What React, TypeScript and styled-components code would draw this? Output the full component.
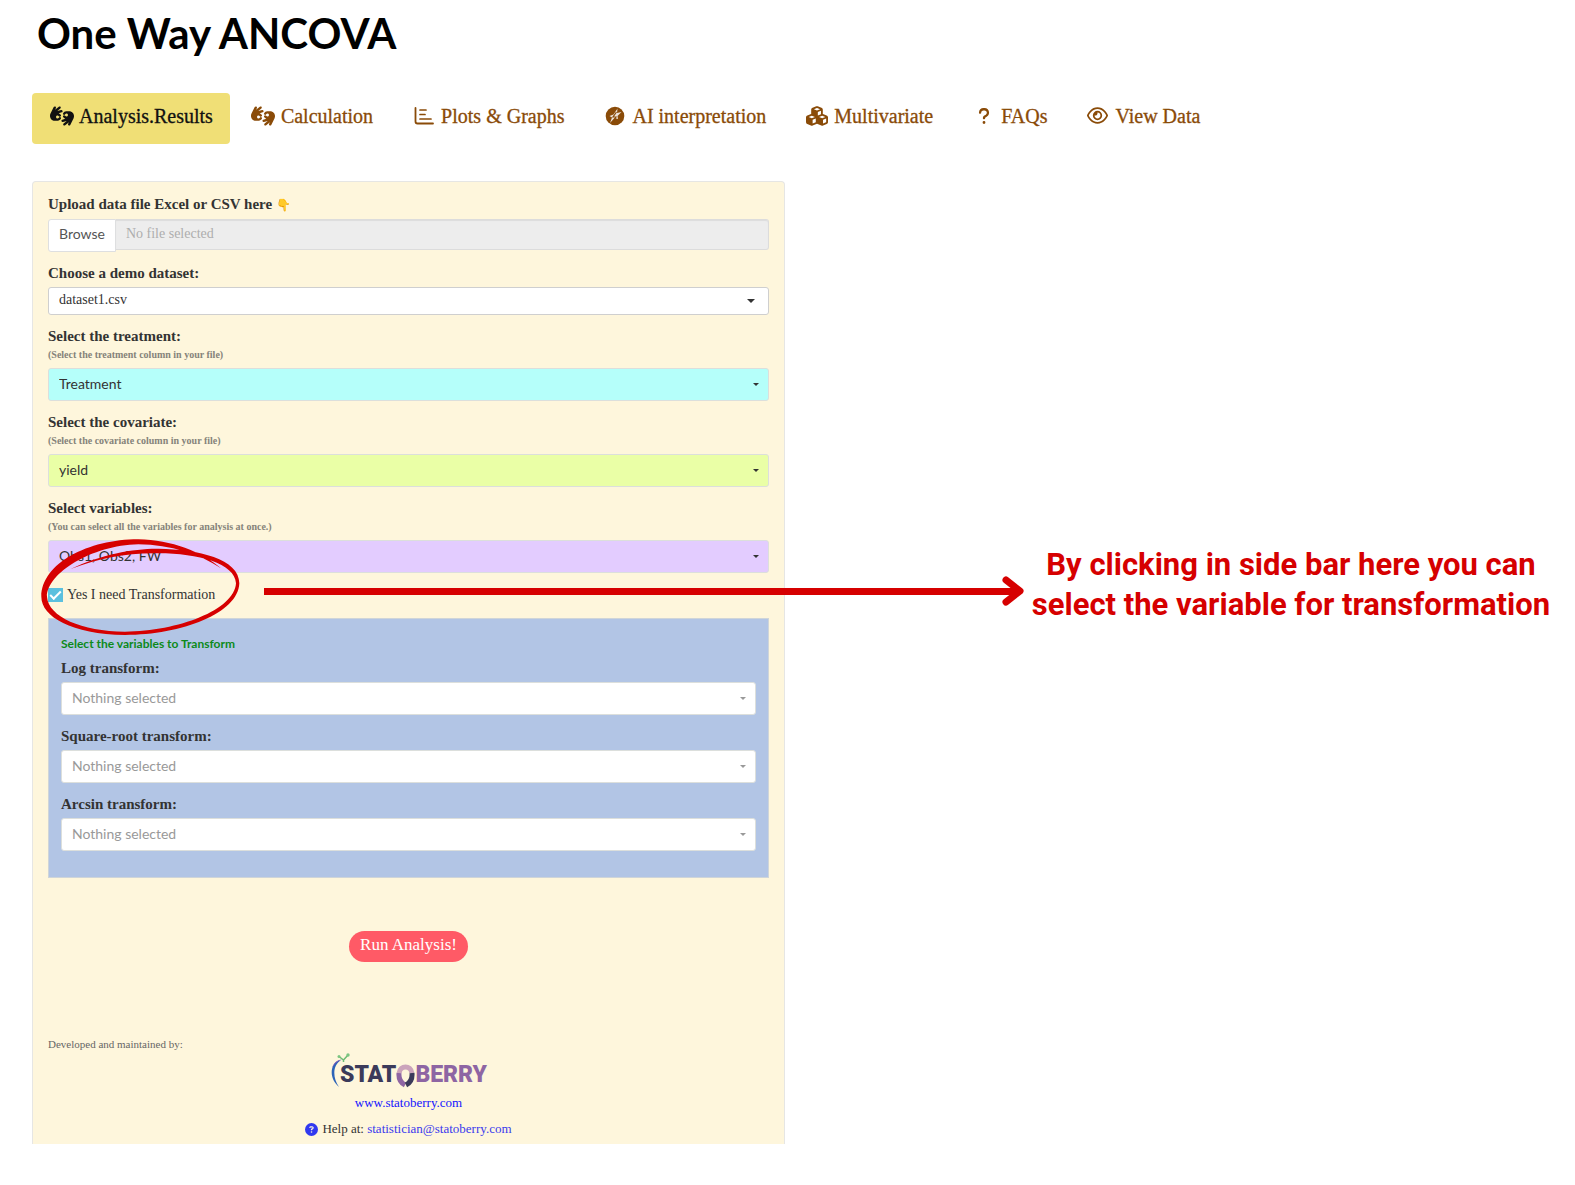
import React, { useState } from 'react';
import styled, { createGlobalStyle } from 'styled-components';
import {
  FaHandsAslInterpreting,
  FaCubes,
  FaQuestion,
  FaRegEye,
  FaCircleQuestion,
} from 'react-icons/fa6';

const serif = '"Liberation Serif", "Times New Roman", serif';
const sans = 'Lato, "Open Sans", sans-serif';
const red = '#d60000';

const GlobalStyle = createGlobalStyle`
  *, *::before, *::after { box-sizing: border-box; }
  body {
    margin: 0;
    background: #fff;
    color: #333;
    font-family: ${serif};
    font-size: 14px;
  }
`;

const Page = styled.div`
  padding: 7px 0 40px 32px;
`;

const Title = styled.h1`
  margin: 0 0 34px;
  padding-left: 5px;
  font: 700 42px/52px ${sans};
  color: #000;
`;

const Nav = styled.nav`
  display: flex;
  flex-wrap: wrap;
  gap: 4px;
  margin-bottom: 37px;
`;

const Tab = styled.a<{ $active?: boolean }>`
  display: flex;
  align-items: center;
  gap: 5px;
  height: 51px;
  padding: 0 17px 6px;
  border-radius: 4px;
  background: ${(p) => (p.$active ? '#f0df76' : 'transparent')};
  color: ${(p) => (p.$active ? '#111' : '#8a4b08')};
  font-size: 20px;
  line-height: 24px;
  text-decoration: none;
  -webkit-text-stroke: 0.3px currentColor;
`;

const TabIcon = styled.span`
  display: flex;
  justify-content: center;
  width: 25px;
`;

const Body = styled.div`
  position: relative;
  display: grid;
  grid-template-columns: 753fr 790fr;
  align-items: start;
`;

const Panel = styled.form`
  display: flex;
  flex-direction: column;
  padding: 12px 15px 5px;
  border: 1px solid #e6e6e4;
  border-bottom: 0;
  border-radius: 4px 4px 0 0;
  background: #fef6dc;
`;

const Field = styled.div`
  margin-bottom: 11px;
`;

const Label = styled.label`
  display: block;
  margin-bottom: 4px;
  font-size: 15px;
  font-weight: 700;
  line-height: 20px;
`;

const Emoji = styled.span`
  font-size: 12px;
`;

const Hint = styled.small`
  display: block;
  color: #85837a;
  font-size: 10px;
  line-height: 18px;
`;

const FileRow = styled.div`
  display: flex;
  align-items: flex-start;
  margin-bottom: 11px;
`;

const HiddenFile = styled.input`
  position: absolute;
  width: 1px;
  height: 1px;
  opacity: 0;
`;

const Browse = styled.label`
  height: 33px;
  padding: 0 10px;
  border: 1px solid #dedfe0;
  border-radius: 3px 0 0 3px;
  background: #fff;
  color: #555;
  font: 14px/28px ${sans};
`;

const FileName = styled.input`
  flex: 1;
  min-width: 0;
  height: 31px;
  padding: 0 10px 2px;
  border: 1px solid #dcdcdc;
  border-left: 0;
  border-radius: 0 3px 3px 0;
  background: #ededed;
  box-shadow: inset 0 1px 1px rgba(0, 0, 0, 0.07);
  font: 14px ${serif};
  &::placeholder {
    color: #adadad;
    opacity: 1;
  }
`;

const SelectBox = styled.div`
  display: grid;
  align-items: center;
  & > * {
    grid-area: 1 / 1;
  }
`;

const Select = styled.select<{ $fill: string; $serif?: boolean; $muted?: boolean }>`
  appearance: none;
  width: 100%;
  height: ${(p) => (p.$serif ? 28 : 33)}px;
  padding: 0 10px 3px;
  border: 1px solid ${(p) => (p.$serif ? '#cfcfcf' : '#dcdfdc')};
  border-radius: 3px;
  background: ${(p) => p.$fill};
  color: ${(p) => (p.$muted ? '#999' : '#333')};
  font: 14px ${(p) => (p.$serif ? serif : sans)};
`;

const Caret = styled.span<{ $large?: boolean; $muted?: boolean }>`
  justify-self: end;
  margin-right: ${(p) => (p.$large ? 14 : 10)}px;
  border: ${(p) => (p.$large ? 4 : 3)}px solid transparent;
  border-top-color: ${(p) => (p.$muted ? '#999' : '#333')};
  border-bottom: 0;
  pointer-events: none;
`;

const CheckRow = styled.div`
  position: relative;
  margin-bottom: 12px;
`;

const CheckLabel = styled.label`
  display: flex;
  align-items: center;
  gap: 4px;
  height: 22px;
  font-size: 14px;
`;

const Checkbox = styled.input`
  appearance: none;
  display: grid;
  place-items: center;
  width: 15px;
  height: 14px;
  margin: 0;
  background: #fff;
  &:checked {
    background: #5bc0de;
  }
  &:checked::after {
    content: '';
    width: 11px;
    height: 6px;
    border: solid #fff;
    border-width: 0 0 2px 2px;
    transform: translateY(-1px) rotate(-45deg);
  }
`;

const Circle = styled.svg`
  position: absolute;
  left: -8px;
  top: -48px;
  width: 202px;
  height: 102px;
  fill: ${red};
  pointer-events: none;
`;

const TransformBox = styled.fieldset`
  min-width: 0;
  margin: 0;
  padding: 15px 12px;
  border: 1px solid #cfd5d9;
  background: #b2c5e5;
`;

const TransformTitle = styled.p`
  margin: 0 0 4px;
  color: #0c8a1a;
  font: 700 12px/20px ${sans};
`;

const RunButton = styled.button`
  align-self: center;
  height: 31px;
  margin: 53px 0 72px;
  padding: 0 11px 4px;
  border: 0;
  border-radius: 16px;
  background: #ff5a66;
  color: #fff;
  font: 17px/24px ${serif};
`;

const Credit = styled.p`
  margin: 0;
  color: #666;
  font-size: 11px;
  line-height: 20px;
`;

const Footer = styled.footer`
  display: flex;
  flex-direction: column;
  align-items: center;
  font-size: 13px;
  line-height: 20px;
`;

const Logo = styled.div`
  display: flex;
  align-items: flex-end;
  height: 35px;
  margin-bottom: 4px;
  font: 900 23px/28px Roboto, ${sans};
`;

const LogoDark = styled.span`
  margin-left: -12px;
  color: #3b3a5a;
`;

const LogoPurple = styled.span`
  color: #8e65a3;
`;

const SiteLink = styled.a`
  margin-bottom: 6px;
  color: #1414ff;
  text-decoration: none;
`;

const Help = styled.div`
  display: flex;
  align-items: center;
  gap: 4px;
`;

const MailLink = styled.a`
  color: #3a3aee;
  text-decoration: none;
`;

const Callout = styled.p`
  margin: 364px 0 0;
  padding: 0 16px 0 238px;
  color: ${red};
  font: 700 31px/40px Roboto, ${sans};
  text-align: center;
`;

const Arrow = styled.div`
  position: absolute;
  top: 395px;
  left: 232px;
  right: calc(100% * 790 / 1543 - 239px);
  display: flex;
  align-items: center;
  pointer-events: none;
`;

const ArrowLine = styled.span`
  flex: 1;
  height: 7px;
  margin-right: -16px;
  background: ${red};
`;

function PlotIcon() {
  return (
    <svg width="20" height="18" viewBox="0 0 20 18" fill="none" stroke="currentColor" strokeLinecap="round">
      <path d="M1.5 1v13.500q0 2 2 2H19" strokeWidth="1.800" />
      <path d="M6 3h6M6 7.500h5M6 12h11" strokeWidth="1.700" />
    </svg>
  );
}

function AiIcon() {
  return (
    <svg width="20" height="20" viewBox="0 0 20 20">
      <circle cx="10" cy="10" r="9.300" fill="currentColor" />
      <path
        d="M12.500 2.500 L12 7 L16.500 6 L12.500 10 L13 13 L9.500 12 L5 17 L7 11.500 L4.500 10 L8.500 8.500 Z"
        fill="#fff"
        opacity="0.850"
      />
      <path d="M11.500 6 L8 11 H11 L8.500 15" fill="none" stroke="currentColor" strokeWidth="1.200" />
    </svg>
  );
}

function LogoSwoosh() {
  return (
    <svg width="22" height="36" viewBox="0 0 22 36" fill="none">
      <path d="M11 7 C0 9 -2 25 9 34 C2 24 3 12 11 7Z" fill="#2c63b8" />
      <path d="M12 6.500 C7 7 3.500 10 2 15 C5 10 8 8 12 6.500Z" fill="#7a55b8" />
      <path d="M9 3.500 L13.500 7 L18 2M13.500 7V9" stroke="#6dbb73" strokeWidth="1.500" />
      <circle cx="9" cy="3.500" r="1.500" fill="#7cc581" />
      <circle cx="18" cy="2" r="1.700" fill="#7cc581" />
    </svg>
  );
}

function LogoRing() {
  return (
    <svg width="19" height="28" viewBox="0 0 19 28" fill="none" strokeWidth="5">
      <path d="M3.200 12 C4 4 15 4 15.800 12" stroke="#cba3bb" />
      <path d="M3 12 C2.500 18 5 22 9 24" stroke="#8e65a3" />
      <path d="M16 12 C16.500 18 14 22 10 24" stroke="#3b3a5a" />
    </svg>
  );
}

interface SelectFieldProps {
  id: string;
  label: string;
  hint?: string;
  value: string;
  fill?: string;
  serif?: boolean;
  muted?: boolean;
}

function SelectField({ id, label, hint, value, fill = '#fff', serif: isSerif, muted }: SelectFieldProps) {
  return (
    <Field>
      <Label htmlFor={id}>
        {label}
        {hint && <Hint>{hint}</Hint>}
      </Label>
      <SelectBox>
        <Select id={id} $fill={fill} $serif={isSerif} $muted={muted}>
          <option>{value}</option>
        </Select>
        <Caret $large={isSerif} $muted={muted} />
      </SelectBox>
    </Field>
  );
}

const tabs = [
  { text: 'Analysis.Results', icon: <FaHandsAslInterpreting size={24} /> },
  { text: 'Calculation', icon: <FaHandsAslInterpreting size={24} /> },
  { text: 'Plots & Graphs', icon: <PlotIcon /> },
  { text: 'AI interpretation', icon: <AiIcon /> },
  { text: 'Multivariate', icon: <FaCubes size={22} /> },
  { text: 'FAQs', icon: <FaQuestion size={18} /> },
  { text: 'View Data', icon: <FaRegEye size={21} /> },
];

export default function App() {
  const [transform, setTransform] = useState(true);
  return (
    <Page>
      <GlobalStyle />
      <Title>One Way ANCOVA</Title>
      <Nav>
        {tabs.map((tab, i) => (
          <Tab key={tab.text} href="#" $active={i === 0}>
            <TabIcon>{tab.icon}</TabIcon>
            {tab.text}
          </Tab>
        ))}
      </Nav>
      <Body>
        <Panel>
          <Label htmlFor="file">
            Upload data file Excel or CSV here <Emoji>👇</Emoji>
          </Label>
          <FileRow>
            <Browse>
              Browse
              <HiddenFile id="file" type="file" />
            </Browse>
            <FileName readOnly placeholder="No file selected" aria-label="Selected file" />
          </FileRow>
          <SelectField id="dataset" label="Choose a demo dataset:" value="dataset1.csv" serif />
          <SelectField
            id="treatment"
            label="Select the treatment:"
            hint="(Select the treatment column in your file)"
            value="Treatment"
            fill="#b5fffa"
          />
          <SelectField
            id="covariate"
            label="Select the covariate:"
            hint="(Select the covariate column in your file)"
            value="yield"
            fill="#eaffa6"
          />
          <SelectField
            id="variables"
            label="Select variables:"
            hint="(You can select all the variables for analysis at once.)"
            value="Obs1, Obs2, FW"
            fill="#e3ccff"
          />
          <CheckRow>
            <CheckLabel>
              <Checkbox type="checkbox" checked={transform} onChange={(e) => setTransform(e.target.checked)} />
              Yes I need Transformation
            </CheckLabel>
            <Circle viewBox="45 408 606 306">
              <path d="M137 507 C230 462 330 445 400 446 C520 448 643 476 643 550 C640 640 470 705 300 705 C140 702 49 650 49 590 C50 490 190 418 340 418 C440 420 530 455 588 505 C520 460 440 435 340 433 C200 436 66 520 66 590 C70 650 170 694 300 695 C460 694 628 630 633 550 C630 490 520 460 400 460 C310 458 220 475 137 507Z" />
            </Circle>
          </CheckRow>
          <TransformBox>
            <TransformTitle>Select the variables to Transform</TransformTitle>
            <SelectField id="log" label="Log transform:" value="Nothing selected" muted />
            <SelectField id="sqrt" label="Square-root transform:" value="Nothing selected" muted />
            <SelectField id="arcsin" label="Arcsin transform:" value="Nothing selected" muted />
          </TransformBox>
          <RunButton type="button">Run Analysis!</RunButton>
          <Credit>Developed and maintained by:</Credit>
          <Footer>
            <Logo role="img" aria-label="Statoberry">
              <LogoSwoosh />
              <LogoDark>STAT</LogoDark>
              <LogoRing />
              <LogoPurple>BERRY</LogoPurple>
            </Logo>
            <SiteLink href="#">www.statoberry.com</SiteLink>
            <Help>
              <FaCircleQuestion size={13} color="#3038f0" />
              <span>
                Help at: <MailLink href="#">statistician@statoberry.com</MailLink>
              </span>
            </Help>
          </Footer>
        </Panel>
        <Callout>By clicking in side bar here you can select the variable for transformation</Callout>
        <Arrow>
          <ArrowLine />
          <svg width="22" height="30" viewBox="0 0 22 30" fill="none">
            <path d="M4 4 L18 15 L4 26" stroke={red} strokeWidth="7" strokeLinecap="round" strokeLinejoin="round" />
          </svg>
        </Arrow>
      </Body>
    </Page>
  );
}
